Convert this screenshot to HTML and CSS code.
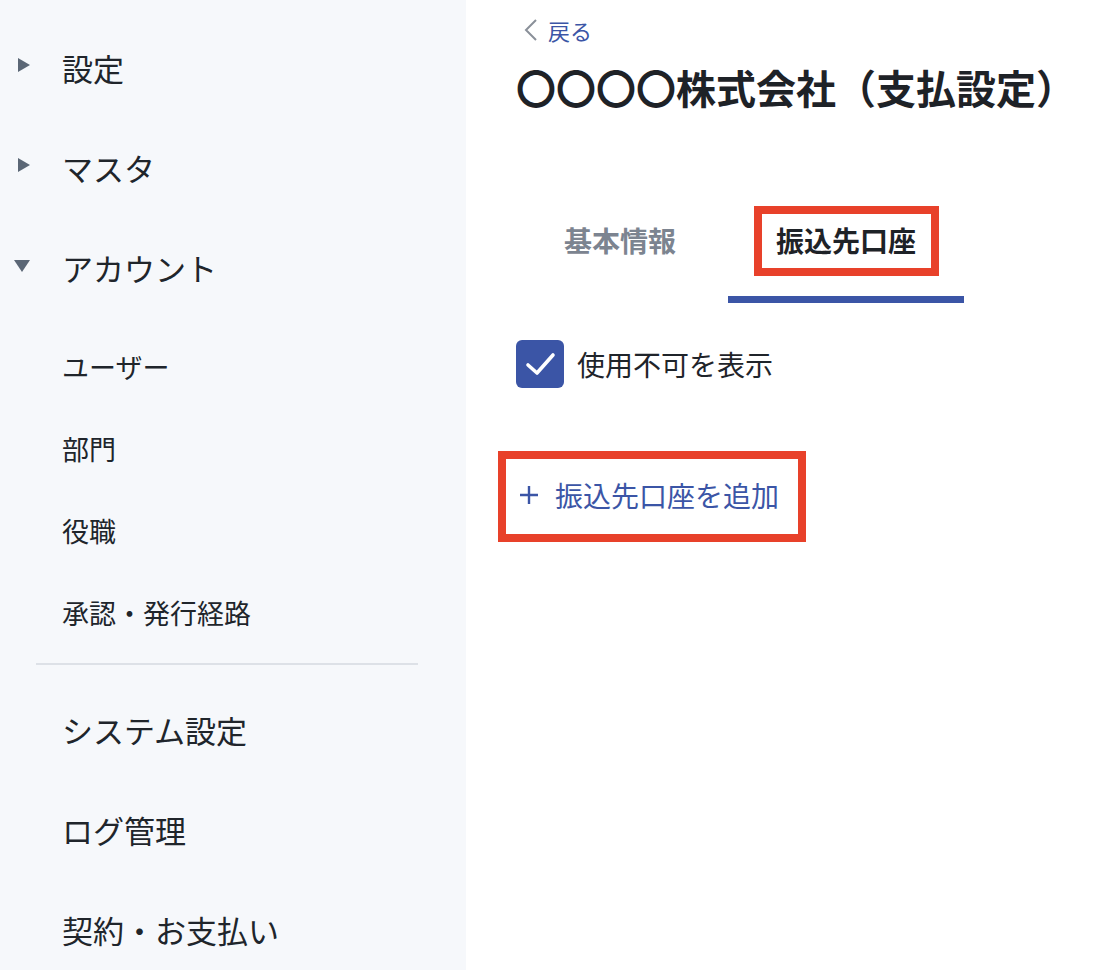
FILE: index.html
```html
<!DOCTYPE html>
<html lang="ja">
<head>
<meta charset="utf-8">
<title>支払設定</title>
<link rel="stylesheet" href="styles.css">
</head>
<body>
<div class="app">
  <nav class="sidebar">
    <div class="nav-item">
      <span class="caret"><svg width="14" height="16" viewBox="0 0 14 16"><polygon points="1,1 13,8 1,15" fill="#5b6776"/></svg></span>
      <span>設定</span>
    </div>
    <div class="nav-item">
      <span class="caret"><svg width="14" height="16" viewBox="0 0 14 16"><polygon points="1,1 13,8 1,15" fill="#5b6776"/></svg></span>
      <span>マスタ</span>
    </div>
    <div class="nav-item">
      <span class="caret caret-down"><svg width="18" height="14" viewBox="0 0 18 14"><polygon points="1,1 17,1 9,13" fill="#5b6776"/></svg></span>
      <span>アカウント</span>
    </div>
    <ul class="sub-list">
      <li class="sub-item">ユーザー</li>
      <li class="sub-item">部門</li>
      <li class="sub-item">役職</li>
      <li class="sub-item">承認・発行経路</li>
    </ul>
    <div class="divider"></div>
    <div class="nav-item plain">システム設定</div>
    <div class="nav-item plain">ログ管理</div>
    <div class="nav-item plain">契約・お支払い</div>
  </nav>
  <main class="main">
    <a class="back" href="#">
      <svg class="back-icon" width="14" height="22" viewBox="0 0 14 22"><polyline points="12,1 2,11 12,21" fill="none" stroke="#8a9099" stroke-width="2"/></svg>
      <span>戻る</span>
    </a>
    <h1 class="title">〇〇〇〇株式会社（支払設定）</h1>
    <div class="tabs">
      <div class="tab">基本情報</div>
      <div class="tab active"><span class="mark">振込先口座</span></div>
    </div>
    <label class="check-row">
      <span class="checkbox"><svg width="48" height="48" viewBox="0 0 48 48"><polyline points="12,25 21,33 37,15" fill="none" stroke="#fff" stroke-width="3.6" stroke-linecap="round" stroke-linejoin="round"/></svg></span>
      <span class="check-label">使用不可を表示</span>
    </label>
    <div class="add-wrap">
      <button class="add-btn" type="button">
        <svg width="20" height="20" viewBox="0 0 20 20"><path d="M10 1V19M1 10H19" stroke="#3b55a6" stroke-width="2.4"/></svg>
        <span>振込先口座を追加</span>
      </button>
    </div>
  </main>
</div>
</body>
</html>
```

FILE: styles.css
```css
* {
  box-sizing: border-box;
}

html, body {
  margin: 0;
  padding: 0;
  height: 100%;
  overflow: hidden;
}

body {
  font-family: "Noto Sans CJK JP", "Noto Sans", sans-serif;
  color: #1f242a;
  background: #ffffff;
}

.app {
  display: flex;
  height: 100vh;
}

.sidebar {
  width: 466px;
  flex: none;
  background: #f6f8fb;
  padding-top: 17px;
}

.nav-item {
  display: flex;
  align-items: center;
  height: 100px;
  padding-left: 12px;
  font-size: 31px;
  line-height: 1;
  color: #20252b;
}

.nav-item.plain {
  padding-left: 62px;
}

.caret {
  width: 20px;
  height: 16px;
  margin-right: 30px;
  margin-bottom: 4px;
  display: flex;
  align-items: center;
}

.caret svg {
  display: block;
  margin-left: 5px;
}

.caret-down {
  margin-bottom: 2px;
}

.caret-down svg {
  margin-left: 1px;
}

.sub-list {
  list-style: none;
  margin: 8px 0 0 0;
  padding: 0;
}

.sub-item {
  height: 82px;
  display: flex;
  align-items: center;
  padding-left: 62px;
  font-size: 27px;
  color: #20252b;
}

.divider {
  height: 2px;
  background: #dde1e7;
  margin: 10px 48px 14px 36px;
}

.main {
  flex: 1;
  padding: 15px 0 0 50px;
}

.back {
  display: flex;
  align-items: center;
  height: 30px;
  gap: 10px;
  text-decoration: none;
  color: #3b55a6;
  font-size: 22px;
  padding-left: 8px;
}

.back-icon {
  display: block;
}

.title {
  margin: 17px 0 0 0;
  height: 50px;
  line-height: 50px;
  font-size: 40px;
  font-weight: 700;
  color: #1e2227;
  white-space: nowrap;
}

.tabs {
  display: flex;
  gap: 4px;
  margin-top: 72px;
}

.tab {
  padding: 36px 48px 36px;
  line-height: 40px;
  font-size: 28px;
  font-weight: 700;
  color: #7c8490;
  border-bottom: 7px solid transparent;
}

.tab.active {
  color: #1e2227;
  border-bottom-color: #3b55a6;
}

.mark {
  position: relative;
  display: inline-block;
}

.mark::after {
  content: "";
  position: absolute;
  top: -14px;
  bottom: -16px;
  left: -22px;
  right: -23px;
  border: 8px solid #e8412a;
}

.check-row {
  display: flex;
  align-items: center;
  gap: 13px;
  margin-top: 37px;
  height: 48px;
}

.checkbox {
  width: 48px;
  height: 48px;
  border-radius: 6px;
  background: #3b55a6;
  display: block;
}

.checkbox svg {
  display: block;
}

.check-label {
  font-size: 28px;
  color: #1f242a;
}

.add-wrap {
  margin-top: 87px;
}

.add-btn {
  position: relative;
  display: inline-flex;
  align-items: center;
  gap: 16px;
  height: 40px;
  padding: 0 0 0 3px;
  border: none;
  background: none;
  font-family: "Noto Sans CJK JP", "Noto Sans", sans-serif;
  font-size: 28px;
  color: #3b55a6;
  cursor: pointer;
}

.add-btn svg {
  display: block;
}

.add-btn::after {
  content: "";
  position: absolute;
  top: -24px;
  bottom: -27px;
  left: -18px;
  right: -27px;
  border: 8px solid #e8412a;
}
```
